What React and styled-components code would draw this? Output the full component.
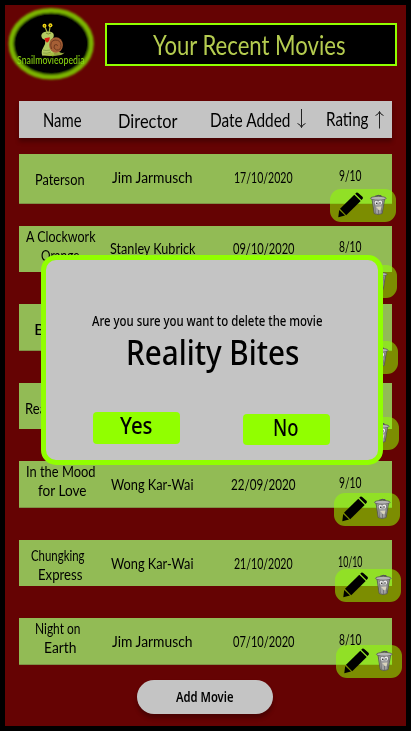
import React, { useLayoutEffect, useRef, useState } from "react";
import styled, { createGlobalStyle } from "styled-components";

const LIME = "#91ff00";
const SILVER = "#c4c4c4";
const MAROON = "#650303";
const LEAF = "#92bb55";

const GlobalStyle = createGlobalStyle`
  *, *::before, *::after { box-sizing: border-box; }
  body { margin: 0; background: #000; }
  button { margin: 0; padding: 0; border: 0; font: inherit; color: inherit; cursor: pointer; }
`;

const Screen = styled.main`
  position: relative;
  display: flex;
  flex-direction: column;
  width: 411px;
  height: 731px;
  border: 5px solid #000;
  background: ${MAROON};
  color: #000;
  font-family: Lato, sans-serif;
  overflow: hidden;
`;

/* Text squeezed or stretched to a set width */
const FitBox = styled.span`
  display: block;
  width: ${(p) => p.$width}px;
  height: ${(p) => p.$line}px;
  line-height: ${(p) => p.$line}px;
  font-size: ${(p) => p.$size}px;
  white-space: nowrap;
`;
const FitInner = styled.span`
  display: inline-block;
  transform-origin: 0 0;
`;

function Fit({ width, size = 14.5, line = 20, children }) {
  const ref = useRef(null);
  const [scale, setScale] = useState(1);
  useLayoutEffect(() => {
    const natural = ref.current.getBoundingClientRect().width / scale;
    if (natural > 0) setScale((width + 0.5) / natural);
  }, [width, size, children]);
  return (
    <FitBox $width={width} $size={size} $line={line}>
      <FitInner ref={ref} style={{ transform: `scaleX(${scale})` }}>{children}</FitInner>
    </FitBox>
  );
}

const Header = styled.header`
  display: flex;
  align-items: flex-start;
  height: 96px;
`;

const Logo = styled.div`
  position: relative;
  width: 100px;
  height: 85px;
  flex: none;
  svg { display: block; }
`;

const LogoName = styled.div`
  position: absolute;
  left: 12px;
  top: 46px;
  color: #86d010;
  font-weight: 500;
`;

const TitleBox = styled.h1`
  display: flex;
  justify-content: center;
  width: 292px;
  height: 43px;
  margin: 18px 0 0;
  padding: 1px 5px 0 0;
  border: 2px solid ${LIME};
  background: #000;
  color: #b5cc50;
  font-weight: 400;
`;

const columns = "82px 102px 120px 69px";

const HeadRow = styled.div`
  display: grid;
  grid-template-columns: ${columns};
  width: 373px;
  height: 37px;
  margin: 0 0 16px 14px;
  background: ${SILVER};
  box-shadow: 0 4px 4px rgba(0, 0, 0, 0.28);
`;

const HeadCell = styled.div`
  display: flex;
  align-items: flex-start;
  padding-left: ${(p) => p.$left}px;
  padding-top: ${(p) => p.$top}px;
  svg { flex: none; margin-left: ${(p) => p.$gap || 0}px; margin-top: ${(p) => p.$drop || 0}px; }
`;

const List = styled.div`
  display: flex;
  flex-direction: column;
  margin-left: 14px;
`;

const Row = styled.div`
  position: relative;
  display: grid;
  grid-template-columns: ${columns};
  width: 373px;
  height: ${(p) => p.$height}px;
  margin-bottom: ${(p) => p.$gap}px;
  background: ${LEAF};
  box-shadow: inset 0 -1px 0 ${(p) => (p.$edge ? "#7f9145" : LEAF)};
`;

const Cell = styled.div`
  display: flex;
  flex-direction: column;
  align-items: center;
  padding-top: ${(p) => p.$top}px;
  padding-right: ${(p) => p.$right || 0}px;
  height: 0;
`;

const NameLine = styled.div`
  margin-right: ${(p) => p.$pull || 0}px;
`;

const Actions = styled.div`
  position: absolute;
  right: -${(p) => p.$right}px;
  bottom: -${(p) => p.$bottom}px;
  width: 66px;
  height: 33px;
  border-radius: 11px;
  background: rgba(143, 255, 0, 0.55);
  svg { display: block; }
`;

const AddButton = styled.button`
  display: flex;
  justify-content: center;
  align-items: flex-start;
  flex: none;
  width: 136px;
  height: 34px;
  margin-left: 132px;
  && { padding: 7px 2px 0 0; }
  border-radius: 17px;
  background: ${SILVER};
  box-shadow: 0 4px 4px rgba(0, 0, 0, 0.28);
  font-family: "Noto Sans", sans-serif;
  font-weight: 600;
`;

const Dialog = styled.section`
  position: absolute;
  left: 36px;
  top: 250px;
  display: flex;
  flex-direction: column;
  align-items: center;
  width: 342px;
  height: 210px;
  padding-top: 51px;
  border: 5px solid ${LIME};
  border-radius: 15px;
  background: ${SILVER};
  font-family: "Noto Sans", sans-serif;
  font-weight: 500;
`;

const Question = styled.div`
  margin-right: 10px;
`;

const MovieName = styled.div`
  margin: -4px 0 0 0;
`;

const Choices = styled.div`
  display: flex;
  justify-content: space-between;
  align-items: flex-start;
  width: 237px;
  margin: 35px 1px 0 0;
`;

const Choice = styled.button`
  display: flex;
  justify-content: center;
  align-items: flex-start;
  width: 87px;
  height: ${(p) => p.$height}px;
  margin-top: ${(p) => p.$drop || 0}px;
  && { padding-right: 2px; }
  border-radius: 4px;
  background: ${LIME};
`;

function LogoArt() {
  return (
    <svg width="100" height="85" viewBox="5 5 100 85">
      <defs>
        <filter id="soft" x="-20%" y="-20%" width="140%" height="140%">
          <feGaussianBlur stdDeviation="1.1" />
        </filter>
      </defs>
      <ellipse cx="51.2" cy="43.8" rx="40.2" ry="33.4" fill="#000" stroke="#7cb500" strokeWidth="4.8" filter="url(#soft)" />
      <path d="M42 55.500q3-3 8-4l6-2 4 3 4 1-3 1.500q-9 1.500-19 .5Z" fill="#a8bb45" />
      <path d="M45 27l2.500 6M50 27l-1 6" stroke="#a9b33c" strokeWidth="1.200" />
      <path d="M41.300 35.500q.5-3.500 5.500-4 6.700-.5 7 3.500 0 3.500-3 5-.5 3.500 3 6.500l3 5-8 2-6.500 2q-1.500-4 1-8 2.500-4 2-7.500-4-1-4-4.500Z" fill="#b4cb62" />
      <path d="M43 50q3 1 7 0M43 53q4 1 8-1" stroke="#7f9a3d" strokeWidth=".8" fill="none" />
      <circle cx="44.500" cy="25.800" r="2" fill="#f0d614" />
      <circle cx="50.400" cy="25.300" r="2" fill="#f0d614" />
      <circle cx="44.500" cy="25.800" r=".6" fill="#4a3500" />
      <circle cx="50.400" cy="25.300" r=".6" fill="#4a3500" />
      <path d="M44.500 38.200l5.300-1q0 4-2.800 5.500-2-1-2.500-4.500Z" fill="#d91d14" />
      <path d="M46 33q2 2 5 0" stroke="#667b26" strokeWidth=".8" fill="none" />
      <ellipse cx="56" cy="45" rx="6.900" ry="7.800" fill="#a65f35" />
      <path d="M51.500 49q-2.500-8 3.500-9 6 0 6 5.500 0 5-4.500 4.500-4-1.500-2-5 3-1.500 3 1" stroke="#6f3a1f" strokeWidth="1" fill="none" />
      <path d="M54 53q6 1 11-.5-5 3-11 2Z" fill="#8d9a3b" />
    </svg>
  );
}

function Arrow({ up }) {
  return (
    <svg width="10" height="20" viewBox="0 0 10 20" fill="none" stroke="#222" strokeWidth="1">
      {up ? <path d="M5.500 18.500V1.500M1.500 5.500Q4.500 4.500 5.500 1.500Q6.500 4.500 9.500 5.500" /> : <path d="M5.500 0V18.500M1.500 14.500Q4.500 15.500 5.500 18.500Q6.500 15.500 9.500 14.500" />}
    </svg>
  );
}

function ActionIcons() {
  return (
    <svg width="66" height="33" viewBox="0 0 66 33">
      <path d="M10 19.700 24.300 5.700 30.700 12 16.200 26.200Z" />
      <path d="M9.200 20.900 15 26.600 8.300 28.300Z" />
      <path d="M25.200 4.800 26.600 3.500Q27.500 3.200 28.200 3.900L32.500 7.800Q33.300 8.700 32.700 9.800L31.500 11.100Z" />
      <path d="M42 10h12.600l-2.400 14.500q-4 2-8 0Z" fill="#a1a1a1" stroke="#505050" strokeWidth=".8" />
      <path d="M44.300 12l1.200 12M52.700 12l-1.500 12M48.500 21v4" stroke="#6d6d6d" strokeWidth=".8" />
      <ellipse cx="48.300" cy="9.300" rx="7.800" ry="1.900" fill="#b5b5b5" stroke="#555" strokeWidth=".8" />
      <path d="M45 7.300q3-2 7 0M47 6.500h4" stroke="#555" strokeWidth="1" fill="none" />
      <ellipse cx="46.300" cy="13.700" rx="1.700" ry="2" fill="#e4e4e4" />
      <ellipse cx="50.300" cy="13.500" rx="1.800" ry="2" fill="#eee" />
      <circle cx="46.800" cy="14.300" r=".7" />
      <circle cx="50" cy="14" r=".7" />
      <path d="M46 18l5.500-.5-1 3.500q-2 .5-2.500-1Z" fill="#d9d4bb" />
    </svg>
  );
}

const movies = [
  { name: [["Paterson", 49, 1]], director: ["Jim Jarmusch", 80], date: ["17/10/2020", 58], rating: ["9/10", 22], height: 50, gap: 22, nameTop: 16, top: 14, right: 4, bottom: 18, edge: true },
  { name: [["A Clockwork", 69], ["Orange", 38]], director: ["Stanley Kubrick", 85], date: ["09/10/2020", 61], rating: ["8/10", 22], height: 46, gap: 32, nameTop: 1, top: 13, right: 5, bottom: 26 },
  { name: [["Before", 51, 2]], height: 47, gap: 32, nameTop: 16, top: 13, right: 6, bottom: 23, edge: true },
  { name: [["Reality Bites", 70]], height: 46, gap: 32, nameTop: 16, top: 13, right: 7, bottom: 21 },
  { name: [["In the Mood", 69], ["for Love", 48, -4]], director: ["Wong Kar-Wai", 82], date: ["22/09/2020", 64], rating: ["9/10", 22], height: 47, gap: 32, nameTop: 1, top: 14, right: 8, bottom: 18, edge: true },
  { name: [["Chungking", 53, 5], ["Express", 44]], director: ["Wong Kar-Wai", 82], date: ["21/10/2020", 58], rating: ["10/10", 24], height: 46, gap: 32, nameTop: 6, top: 14, right: 9, bottom: 16 },
  { name: [["Night on", 45, 5], ["Earth", 32]], director: ["Jim Jarmusch", 80], date: ["07/10/2020", 61], rating: ["8/10", 22], height: 47, gap: 15, nameTop: 1, top: 14, right: 10, bottom: 13, edge: true },
];

function MovieRow({ movie: m }) {
  return (
    <Row $height={m.height} $gap={m.gap} $edge={m.edge}>
      <Cell $top={m.nameTop}>
        {m.name.map(([text, w, pull]) => (
          <NameLine key={text} $pull={pull}><Fit width={w} line={19}>{text}</Fit></NameLine>
        ))}
      </Cell>
      <Cell $top={m.top}>{m.director && <Fit width={m.director[1]}>{m.director[0]}</Fit>}</Cell>
      <Cell $top={m.top}>{m.date && <Fit width={m.date[1]}>{m.date[0]}</Fit>}</Cell>
      <Cell $top={m.top - 2} $right={15}>{m.rating && <Fit width={m.rating[1]}>{m.rating[0]}</Fit>}</Cell>
      <Actions $right={m.right} $bottom={m.bottom}><ActionIcons /></Actions>
    </Row>
  );
}

export default function App() {
  return (
    <>
      <GlobalStyle />
      <Screen>
        <Header>
          <Logo>
            <LogoArt />
            <LogoName><Fit width={67} size={11} line={18}>Snailmovieopedia</Fit></LogoName>
          </Logo>
          <TitleBox><Fit width={192} size={26} line={38}>Your Recent Movies</Fit></TitleBox>
        </Header>
        <HeadRow>
          <HeadCell $left={24} $top={7}><Fit width={38} size={19} line={24}>Name</Fit></HeadCell>
          <HeadCell $left={17} $top={8}><Fit width={59} size={18.5} line={24}>Director</Fit></HeadCell>
          <HeadCell $left={7} $top={7} $gap={6} $drop={1}>
            <Fit width={80} size={19} line={24}>Date Added</Fit>
            <Arrow />
          </HeadCell>
          <HeadCell $left={3} $top={6} $gap={6} $drop={3}>
            <Fit width={42} size={19} line={24}>Rating</Fit>
            <Arrow up />
          </HeadCell>
        </HeadRow>
        <List>
          {movies.map((m) => <MovieRow key={m.name[0][0]} movie={m} />)}
        </List>
        <AddButton><Fit width={57} size={13.5} line={20}>Add Movie</Fit></AddButton>
        <Dialog>
          <Question><Fit width={230} size={13.500} line={20}>Are you sure you want to delete the movie</Fit></Question>
          <MovieName><Fit width={173} size={34} line={50}>Reality Bites</Fit></MovieName>
          <Choices>
            <Choice $height={32}><Fit width={32} size={23} line={27}>Yes</Fit></Choice>
            <Choice $height={31} $drop={2}><Fit width={25} size={23} line={26}>No</Fit></Choice>
          </Choices>
        </Dialog>
      </Screen>
    </>
  );
}
